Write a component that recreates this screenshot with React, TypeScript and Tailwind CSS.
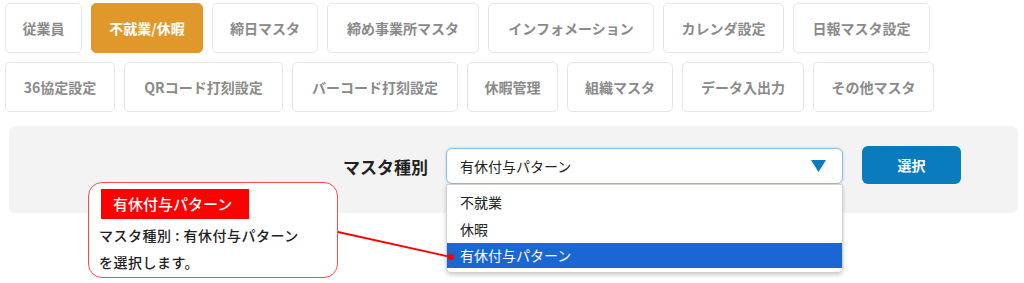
const font = { fontFamily: '"Noto Sans CJK JP", "Noto Sans", sans-serif' }

const row1 = [
  { label: '従業員', w: 'w-[77px]' },
  { label: '不就業/休暇', w: 'w-[112px]', active: true },
  { label: '締日マスタ', w: 'w-[106px]' },
  { label: '締め事業所マスタ', w: 'w-[152px]' },
  { label: 'インフォメーション', w: 'w-[166px]' },
  { label: 'カレンダ設定', w: 'w-[121px]' },
  { label: '日報マスタ設定', w: 'w-[137px]' },
]

const row2 = [
  { label: '36協定設定', w: 'w-[110px]' },
  { label: 'QRコード打刻設定', w: 'w-[159px]' },
  { label: 'バーコード打刻設定', w: 'w-[166px]' },
  { label: '休暇管理', w: 'w-[91px]' },
  { label: '組織マスタ', w: 'w-[106px]' },
  { label: 'データ入出力', w: 'w-[122px]' },
  { label: 'その他マスタ', w: 'w-[121px]' },
]

type Tab = { label: string; w: string; active?: boolean }

const TabButton = ({ tab }: { tab: Tab }) => (
  <button
    className={
      'flex h-[50px] items-center justify-center rounded-[5px] border text-[14px] font-bold ' +
      tab.w +
      (tab.active
        ? ' border-[#e0982a] bg-[#e0982a] text-white'
        : ' border-[#e6e6e6] bg-white text-[#8a8a8a]')
    }
  >
    {tab.label}
  </button>
)

export default function App() {
  return (
    <div className="relative h-[283px] w-[1024px] overflow-hidden bg-white" style={font}>
      {/* Tabs */}
      <div className="flex flex-col gap-[9px] pl-[5px] pt-[3px]">
        <div className="flex gap-[9px]">
          {row1.map((t) => (
            <TabButton key={t.label} tab={t} />
          ))}
        </div>
        <div className="flex gap-[9px]">
          {row2.map((t) => (
            <TabButton key={t.label} tab={t} />
          ))}
        </div>
      </div>

      {/* Master type panel */}
      <div className="ml-[9px] mt-[14px] flex h-[87px] w-[1009px] items-start justify-end rounded-[6px] bg-[#f3f3f3] pr-[57px] pt-[20px]">
        <span className="mt-[9px] text-[17px] font-bold leading-[24px] text-[#222]">マスタ種別</span>
        <div className="relative ml-[18px] mt-[2px] w-[397px]">
          <div className="flex h-[36px] items-center justify-between rounded-[6px] border border-[#8dbde3] bg-white pl-[13px] pr-[16px] shadow-[0_0_3px_#b3d4ee]">
            <span className="text-[14px] text-[#222]">有休付与パターン</span>
            <svg width="15" height="12" viewBox="0 0 15 12">
              <polygon points="0,0 15,0 7.5,12" fill="#0a7bbd" />
            </svg>
          </div>
          {/* Dropdown list */}
          <div className="absolute left-0 top-full z-10 w-[397px] rounded-b-[5px] border border-[#d0d0d0] bg-white py-[4px] shadow-[0_2px_4px_rgba(0,0,0,0.2)]">
            <div className="flex h-[27px] items-center pl-[13px] text-[14px] text-[#222]">不就業</div>
            <div className="flex h-[27px] items-center pl-[13px] text-[14px] text-[#222]">休暇</div>
            <div className="flex h-[25px] items-center bg-[#1a66d3] pl-[13px] text-[14px] text-white">有休付与パターン</div>
          </div>
        </div>
        <button className="ml-[19px] h-[38px] w-[99px] rounded-[6px] bg-[#0a7bbd] text-[14px] font-bold text-white">
          選択
        </button>
      </div>

      {/* Callout */}
      <div className="absolute left-[88px] top-[182px] z-20 h-[96px] w-[250px] rounded-[14px] border-[1.5px] border-[#ff4a4a] bg-white pl-[10px] pt-[6px]">
        <div className="ml-[2px] flex h-[30px] w-[148px] items-center bg-[#ff0000] pl-[12px] text-[15px] font-medium text-white">
          有休付与パターン
        </div>
        <div className="mt-[3px] text-[14px] font-medium leading-[27px] tracking-[0.5px] text-[#222]">
          <div>マスタ種別 : 有休付与パターン</div>
          <div>を選択します。</div>
        </div>
      </div>
      <svg className="absolute left-0 top-0 z-30" width="1024" height="283">
        <line x1="338" y1="232" x2="451" y2="257" stroke="#ff0000" strokeWidth="1.8" />
        <circle cx="451" cy="257" r="3" fill="#ff0000" />
      </svg>
    </div>
  )
}
